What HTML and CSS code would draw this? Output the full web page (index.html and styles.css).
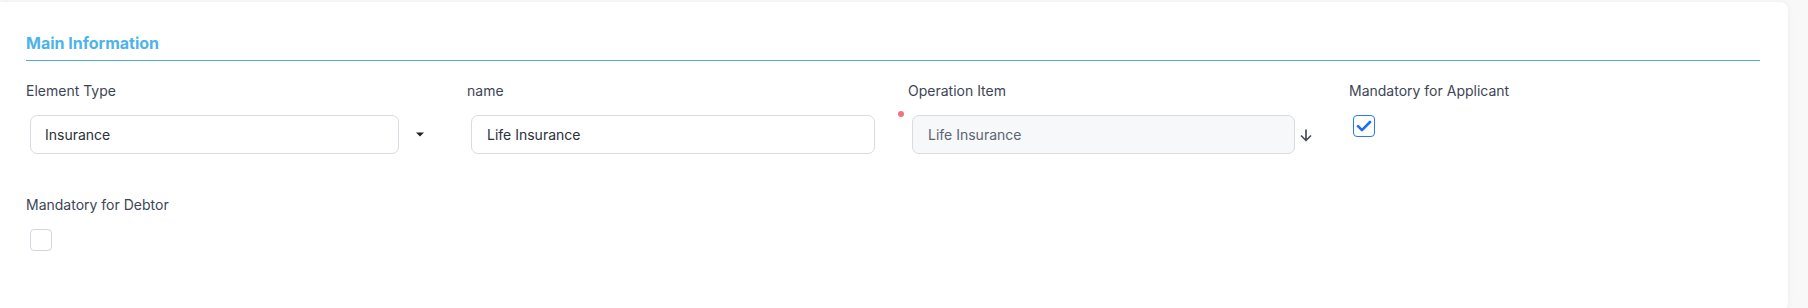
FILE: index.html
```html
<!DOCTYPE html>
<html lang="en">
<head>
    <meta charset="UTF-8">
    <meta name="viewport" content="width=device-width, initial-scale=1.0">
    <title>Main Information</title>
    <link rel="stylesheet" href="styles.css">
</head>
<body>
    <div class="card">
        <h2 class="section-title">Main Information</h2>

        <div class="form-grid">
            <div class="field">
                <label class="field-label">Element Type</label>
                <div class="control">
                    <div class="input select-box">Insurance</div>
                    <span class="caret">
                        <svg width="8" height="5" viewBox="0 0 8 5"><path d="M0 0.5h8L4 4.5z" fill="#1f2329"/></svg>
                    </span>
                </div>
            </div>

            <div class="field">
                <label class="field-label">name</label>
                <div class="control">
                    <div class="input name-input">Life Insurance</div>
                </div>
            </div>

            <div class="field">
                <label class="field-label">Operation Item</label>
                <div class="control">
                    <span class="required-dot"></span>
                    <div class="input input-disabled operation-input">Life Insurance</div>
                    <span class="down-arrow">
                        <svg width="12" height="13" viewBox="0 0 12 13"><path d="M6 1v10.5M1.5 7l4.5 4.5L10.5 7" fill="none" stroke="#4a4f57" stroke-width="1.7" stroke-linecap="round" stroke-linejoin="round"/></svg>
                    </span>
                </div>
            </div>

            <div class="field">
                <label class="field-label">Mandatory for Applicant</label>
                <div class="control">
                    <span class="checkbox checked">
                        <svg width="16" height="12" viewBox="0 0 16 12"><path d="M2 6.2l4 4L14 2" fill="none" stroke="#1f6ff2" stroke-width="2.6" stroke-linecap="round" stroke-linejoin="round"/></svg>
                    </span>
                </div>
            </div>

            <div class="field">
                <label class="field-label">Mandatory for Debtor</label>
                <div class="control">
                    <span class="checkbox"></span>
                </div>
            </div>
        </div>
    </div>
</body>
</html>
```

FILE: styles.css
```css
body {
    margin: 0;
    padding: 2px 20px 0 0;
    background: #f8f8f9;
    font-family: Inter, "Noto Sans", sans-serif;
    color: #333;
}

.card {
    background: white;
    border-radius: 0 8px 8px 0;
    box-shadow: 0 0 6px rgba(0, 0, 0, 0.05);
    padding: 31px 28px 60px 26px;
    min-height: 210px;
}

.section-title {
    margin: 0;
    padding-bottom: 7px;
    border-bottom: 1px solid #52acdc;
    font-size: 16px;
    line-height: 20px;
    font-weight: 700;
    color: #4db3ea;
}

.form-grid {
    display: grid;
    grid-template-columns: 441px 441px 441px 1fr;
    row-gap: 41px;
    margin-top: 20px;
}

.field-label {
    display: block;
    font-size: 14px;
    line-height: 20px;
    color: #3d4556;
}

.control {
    position: relative;
    display: flex;
    align-items: center;
    margin-top: 14px;
    padding-left: 4px;
}

.input {
    box-sizing: border-box;
    height: 39px;
    padding: 0 14px;
    border: 1px solid #d8dbe2;
    border-radius: 7px;
    font-size: 14px;
    line-height: 37px;
    color: #2b303a;
    background: white;
}

.select-box {
    width: 369px;
}

.name-input {
    width: 404px;
    padding-left: 15px;
}

.operation-input {
    width: 383px;
    padding-left: 15px;
}

.input-disabled {
    background: #f7f8fa;
    color: #5d6472;
}

.caret {
    display: flex;
    margin-left: 17px;
}

.down-arrow {
    display: flex;
    margin-left: 5px;
    margin-top: 1px;
}

.required-dot {
    position: absolute;
    left: -10px;
    top: -4px;
    width: 6px;
    height: 6px;
    border-radius: 50%;
    background: #f17280;
}

.checkbox {
    box-sizing: border-box;
    display: flex;
    align-items: center;
    justify-content: center;
    width: 22px;
    height: 22px;
    border: 1px solid #d3d6de;
    border-radius: 4px;
    background: white;
    align-self: flex-start;
}

.checkbox.checked {
    border: 1.5px solid #2a78f4;
}
```
